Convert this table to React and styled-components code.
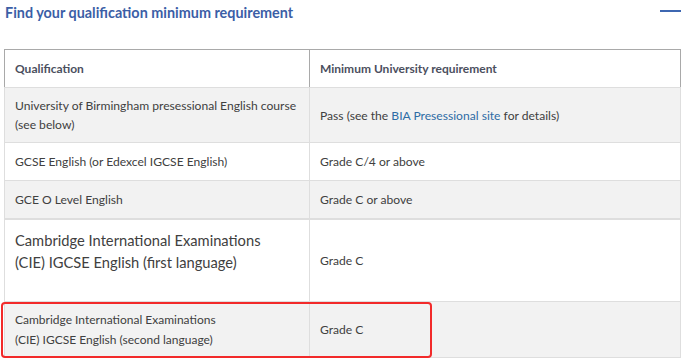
import React from 'react'
import styled, { createGlobalStyle } from 'styled-components'

const GlobalStyle = createGlobalStyle`
    body {
        margin: 0;
        background: #fff;
        font-family: Lato, "Noto Sans", sans-serif;
        color: #404040;
    }
`

const Frame = styled.div`
    position: relative;
`

const Panel = styled.section`
    width: 692px;
    height: 363px;
    overflow: hidden;
    box-sizing: border-box;
    padding: 0 11px 0 4px;
`

const TitleBar = styled.div`
    display: flex;
    align-items: center;
    justify-content: space-between;
    height: 24px;
    padding-left: 1px;
    margin-bottom: 25px;
`

const Title = styled.h2`
    margin: 0;
    font-size: 14.4px;
    font-weight: 700;
    color: #3b5ea6;
`

const Collapse = styled.span`
    display: block;
    width: 21px;
    height: 2px;
    margin-top: -2px;
    background: #3d67b1;
`

const Table = styled.table`
    width: 677px;
    border-collapse: collapse;
    table-layout: fixed;
`

const HeadCell = styled.th`
    box-sizing: border-box;
    width: ${p => p.$width || 'auto'};
    height: 38px;
    padding: 0 4px 0 10px;
    text-align: left;
    font-size: 12px;
    font-weight: 700;
    color: #4b4f5e;
    border: 1px solid #a9a9a9;
    border-bottom: 1px solid #dedede;
`

const Row = styled.tr`
    background: ${p => (p.$shade ? '#f2f2f2' : '#fff')};
`

const Cell = styled.td`
    box-sizing: border-box;
    height: ${p => p.$height}px;
    padding: 0 4px 0 10px;
    vertical-align: middle;
    white-space: nowrap;
    font-size: ${p => p.$size || 12.1}px;
    line-height: ${p => p.$lh || 19}px;
    border: 1px solid #dedede;
    border-bottom-width: ${p => (p.$thick ? 2 : 1)}px;
`

const Lead = styled.p`
    margin: 0 0 18px;
`

const Link = styled.a`
    color: #2e6ca5;
    text-decoration: none;
`

const Marker = styled.div`
    position: absolute;
    left: 1px;
    top: 302px;
    width: 431px;
    height: 56px;
    box-sizing: border-box;
    border: 2px solid #f22a2a;
    border-radius: 4px;
    pointer-events: none;
`

export default function App() {
    return (
        <Frame>
            <GlobalStyle />
            <Panel>
                <TitleBar>
                    <Title>Find your qualification minimum requirement</Title>
                    <Collapse />
                </TitleBar>
                <Table>
                    <thead>
                        <tr>
                            <HeadCell $width="305px">Qualification</HeadCell>
                            <HeadCell>Minimum University requirement</HeadCell>
                        </tr>
                    </thead>
                    <tbody>
                        <Row $shade>
                            <Cell $height={55}>University of Birmingham presessional English course<br />(see below)</Cell>
                            <Cell $height={55}>Pass (see the <Link href="#">BIA Presessional site</Link> for details)</Cell>
                        </Row>
                        <Row>
                            <Cell $height={38}>GCSE English (or Edexcel IGCSE English)</Cell>
                            <Cell $height={38}>Grade C/4 or above</Cell>
                        </Row>
                        <Row $shade>
                            <Cell $height={38} $thick>GCE O Level English</Cell>
                            <Cell $height={38} $thick>Grade C or above</Cell>
                        </Row>
                        <Row>
                            <Cell $height={83} $size={14.7} $lh={22}>
                                <Lead>Cambridge International Examinations<br />(CIE) IGCSE English (first language)</Lead>
                            </Cell>
                            <Cell $height={83}>Grade C</Cell>
                        </Row>
                        <Row $shade>
                            <Cell $height={56} $size={12} $lh={20}>Cambridge International Examinations<br />(CIE) IGCSE English (second language)</Cell>
                            <Cell $height={56}>Grade C</Cell>
                        </Row>
                    </tbody>
                </Table>
            </Panel>
            <Marker />
        </Frame>
    )
}
